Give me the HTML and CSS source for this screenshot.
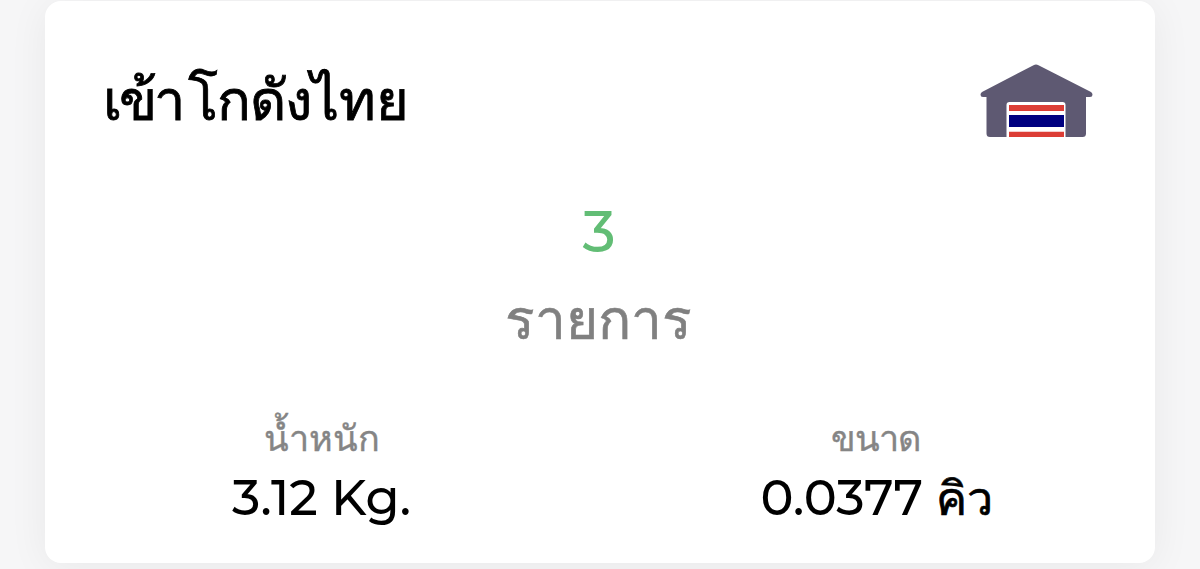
FILE: index.html
```html
<!DOCTYPE html>
<html lang="th">
<head>
<meta charset="utf-8">
<title>เข้าโกดังไทย</title>
<link rel="stylesheet" href="styles.css">
</head>
<body>
<main class="card">
  <header class="head">
    <h1 class="title"><span class="word-enter">เข้า</span><span class="word-store">โกดัง</span><span class="word-thai">ไทย</span></h1>
    <svg class="icon" viewBox="0 0 114 74" width="114" height="74">
      <path fill="#5e5972" d="M54.5 1.2 Q57 -.2 59.500 1.2 L112 28 Q113.500 29 113.500 30.800 Q113.500 33 111 33 H107 V69.500 Q107 73 103.500 73 H11 Q7.500 73 7.500 69.500 V33 H4 Q1.500 33 1.500 30.800 Q1.500 29 3 28 Z"/>
      <path fill="#fff" d="M27.500 74V41q0-3 3-3h53q3 0 3 3v33z"/>
      <path fill="#dc3d35" d="M30 41h55v6h-55zM30 67.700h55V73h-55z"/>
      <path fill="#000080" d="M30 51h55v12h-55z"/>
    </svg>
  </header>
  <section class="summary">
    <div class="count">3</div>
    <div class="unit">รายการ</div>
  </section>
  <section class="stats">
    <div class="stat">
      <div class="label">น้ำหนัก</div>
      <div class="value">3.12 Kg.</div>
    </div>
    <div class="stat">
      <div class="label label-size">ขนาด</div>
      <div class="value">0.0377 <span class="measure">คิว</span></div>
    </div>
  </section>
</main>
</body>
</html>
```
FILE: styles.css
```css
* { box-sizing: border-box; }
body { margin: 0; height: 569px; overflow: hidden; background: #f6f6f7; padding: 1px 45px 0; font-family: Montserrat, Inter, "Noto Sans", sans-serif; color: #000; }
.card { height: 562px; background: #fff; border-radius: 16px; padding: 62px 62px 0 58px; box-shadow: 0 4px 40px rgba(0,0,0,.06); white-space: nowrap; }
.head { display: flex; justify-content: space-between; height: 124px; }
.title { display: flex; margin: 0; font-size: 56px; font-weight: 500; line-height: 74px; -webkit-text-stroke: .8px #000; }
.word-enter { letter-spacing: -3.2px; margin-right: 7px; }
.word-store { letter-spacing: -1.2px; }
.icon { display: block; margin-top: 1px; }
.summary { text-align: center; height: 221px; }
.count { color: #62bd75; font-size: 58px; font-weight: 500; line-height: 90px; padding-left: 2px; }
.unit { color: #808080; font-size: 55px; line-height: 86px; padding-left: 1px; -webkit-text-stroke: .6px #808080; }
.stats { display: flex; margin: 0 -62px 0 -58px; }
.stat { flex: 1; text-align: center; padding-right: 2px; }
.label { color: #858585; font-size: 36px; line-height: 60px; -webkit-text-stroke: .4px #858585; }
.label-size { letter-spacing: -.8px; padding-right: 2px; }
.value { font-size: 49.500px; line-height: 58px; font-weight: 500; }
.measure { font-size: 46.500px; letter-spacing: -.5px; -webkit-text-stroke: .7px #000; }
```
